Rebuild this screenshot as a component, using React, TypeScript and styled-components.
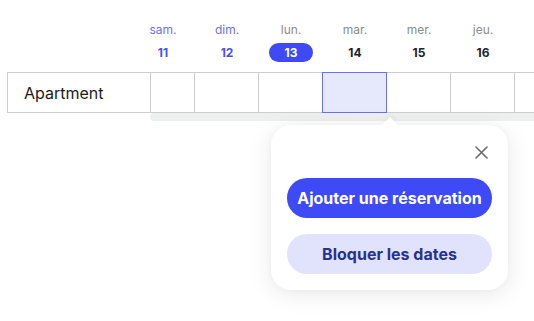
import React from "react";
import styled, { createGlobalStyle } from "styled-components";

const Global = createGlobalStyle`
  html, body { margin: 0; padding: 0; background: #ffffff; }
  body { font-family: Inter, "Noto Sans", sans-serif; overflow: hidden; }
  * { box-sizing: border-box; }
`;

const Page = styled.div`
  position: relative;
  width: 534px;
  height: 321px;
  overflow: hidden;
  padding-left: 7px;
`;

const Header = styled.div`
  display: flex;
  padding-top: 22px;
  height: 72px;
`;

const HeaderSpacer = styled.div`
  flex: 0 0 124px;
`;

const DayCol = styled.div`
  flex: 0 0 64px;
  display: flex;
  flex-direction: column;
  align-items: center;
  gap: 5px;
`;

const DayName = styled.div<{ $weekend?: boolean }>`
  font-size: 12px;
  line-height: 16px;
  color: ${(p) => (p.$weekend ? "#6d6ff3" : "#8c8c8c")};
`;

const DayNum = styled.div<{ $weekend?: boolean; $today?: boolean }>`
  width: 44px;
  height: 19px;
  border-radius: 10px;
  display: flex;
  align-items: center;
  justify-content: center;
  font-size: 12px;
  font-weight: 700;
  color: ${(p) => (p.$today ? "#ffffff" : p.$weekend ? "#4b4fe8" : "#1d2330")};
  background: ${(p) => (p.$today ? "#3d4af5" : "transparent")};
`;

const Row = styled.div`
  display: flex;
  height: 41px;
  border-top: 1px solid #cdcdcd;
  border-bottom: 1px solid #cdcdcd;
  width: 600px;
`;

const LabelCell = styled.div`
  flex: 0 0 144px;
  display: flex;
  align-items: center;
  padding-left: 16px;
  border-left: 1px solid #cdcdcd;
  border-right: 1px solid #cdcdcd;
  font-size: 16px;
  color: #1b1b1b;
`;

const Cell = styled.div<{ $w: number; $selected?: boolean }>`
  flex: 0 0 ${(p) => p.$w}px;
  border-right: 1px solid #cdcdcd;
  margin-top: ${(p) => (p.$selected ? "-1px" : "0")};
  margin-bottom: ${(p) => (p.$selected ? "-1px" : "0")};
  margin-left: ${(p) => (p.$selected ? "-1px" : "0")};
  ${(p) =>
    p.$selected
      ? `background: #e6e8fb; border: 1px solid #6a70ee; flex-basis: 65px;`
      : ""}
`;

const ScrollTrack = styled.div`
  margin-left: 143px;
  height: 8px;
  background: #eef0f0;
  border-radius: 4px 0 0 4px;
`;

const Popover = styled.div`
  position: absolute;
  left: 271px;
  top: 125px;
  width: 237px;
  height: 165px;
  background: #ffffff;
  border-radius: 20px;
  box-shadow: 0 4px 24px rgba(0, 0, 0, 0.09), 0 0 6px rgba(0, 0, 0, 0.03);
  padding: 16px;
  display: flex;
  flex-direction: column;
`;

const Arrow = styled.div`
  position: absolute;
  top: -8px;
  left: 111px;
  width: 0;
  height: 0;
  border-left: 8px solid transparent;
  border-right: 8px solid transparent;
  border-bottom: 8px solid #ffffff;
  filter: drop-shadow(0 -2px 2px rgba(0, 0, 0, 0.04));
`;

const CloseRow = styled.div`
  display: flex;
  justify-content: flex-end;
  height: 22px;
  margin-bottom: 15px;
`;

const CloseBtn = styled.button`
  width: 22px;
  height: 22px;
  border: none;
  background: none;
  padding: 0;
  display: flex;
  align-items: center;
  justify-content: center;
  cursor: pointer;
`;

const Buttons = styled.div`
  display: flex;
  flex-direction: column;
  gap: 16px;
`;

const PillButton = styled.button<{ $primary?: boolean }>`
  height: 40px;
  border: none;
  border-radius: 20px;
  font-family: Inter, "Noto Sans", sans-serif;
  font-size: 16px;
  font-weight: 700;
  letter-spacing: 0;
  color: ${(p) => (p.$primary ? "#ffffff" : "#29308f")};
  background: ${(p) => (p.$primary ? "#3d4af5" : "#e1e3fc")};
  cursor: pointer;
`;

const days = [
  { name: "sam.", num: 11, weekend: true },
  { name: "dim.", num: 12, weekend: true },
  { name: "lun.", num: 13, today: true },
  { name: "mar.", num: 14 },
  { name: "mer.", num: 15 },
  { name: "jeu.", num: 16 },
];

export default function App() {
  return (
    <>
      <Global />
      <Page>
        <Header>
          <HeaderSpacer />
          {days.map((d) => (
            <DayCol key={d.num}>
              <DayName $weekend={d.weekend}>{d.name}</DayName>
              <DayNum $weekend={d.weekend} $today={d.today}>
                {d.num}
              </DayNum>
            </DayCol>
          ))}
        </Header>
        <Row>
          <LabelCell>Apartment</LabelCell>
          <Cell $w={44} />
          <Cell $w={64} />
          <Cell $w={64} />
          <Cell $w={64} $selected />
          <Cell $w={64} />
          <Cell $w={64} />
          <Cell $w={64} />
        </Row>
        <ScrollTrack />
        <Popover>
          <Arrow />
          <CloseRow>
            <CloseBtn aria-label="Fermer">
              <svg width="13" height="13" viewBox="0 0 13 13">
                <path
                  d="M1 1 L12 12 M12 1 L1 12"
                  stroke="#6b6b6b"
                  strokeWidth="1.6"
                  strokeLinecap="round"
                />
              </svg>
            </CloseBtn>
          </CloseRow>
          <Buttons>
            <PillButton $primary>Ajouter une réservation</PillButton>
            <PillButton>Bloquer les dates</PillButton>
          </Buttons>
        </Popover>
      </Page>
    </>
  );
}
